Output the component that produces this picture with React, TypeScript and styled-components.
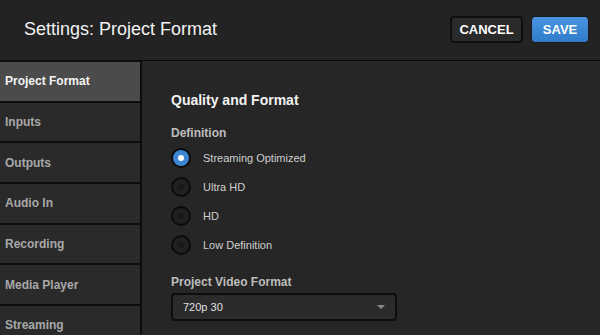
import styled, { createGlobalStyle } from "styled-components"

const GlobalStyle = createGlobalStyle`
  html, body {
    margin: 0;
    padding: 0;
    background: #232323;
  }
  body {
    font-family: "Liberation Sans", Arial, sans-serif;
    -webkit-font-smoothing: antialiased;
  }
`

const Page = styled.div`
  width: 600px;
  height: 335px;
  display: flex;
  flex-direction: column;
  overflow: hidden;
  background: #232323;
`

const Header = styled.header`
  height: 61px;
  flex: none;
  display: flex;
  align-items: center;
  justify-content: space-between;
  padding: 0 11px 0 24px;
  box-sizing: border-box;
  background: #232323;
  border-bottom: 1px solid #0b0b0b;
`

const Title = styled.h1`
  margin: 0 0 1px;
  font-size: 18px;
  font-weight: normal;
  color: #f2f2f2;
`

const Actions = styled.div`
  display: flex;
  gap: 8px;
  margin-top: -1px;
`

const Button = styled.button<{ $primary?: boolean }>`
  height: 27px;
  width: ${(p) => (p.$primary ? "58px" : "73px")};
  padding: 0;
  border-radius: 4px;
  font-family: "Liberation Sans", Arial, sans-serif;
  font-size: 13px;
  font-weight: bold;
  color: #fff;
  border: ${(p) => (p.$primary ? "1px solid #1b1b1b" : "2px solid #0f0f0f")};
  background: ${(p) =>
    p.$primary ? "linear-gradient(#4a95e0, #2f7ccb)" : "#2a2a2a"};
  box-sizing: border-box;
`

const Body = styled.div`
  flex: 1;
  display: flex;
  min-height: 0;
`

const Sidebar = styled.nav`
  width: 140px;
  flex: none;
  display: flex;
  flex-direction: column;
  gap: 2px;
  background: #0d0d0d;
  padding-top: 1px;
  border-right: 2px solid #0d0d0d;
`

const NavItem = styled.div<{ $active?: boolean }>`
  height: 38.7px;
  flex: none;
  display: flex;
  align-items: center;
  padding-left: 5px;
  font-size: 12px;
  font-weight: bold;
  color: ${(p) => (p.$active ? "#f4f4f4" : "#a8a8a8")};
  background: ${(p) => (p.$active ? "#4b4b4b" : "#2a2a2a")};
`

const Content = styled.main`
  flex: 1;
  padding: 31px 0 0 29px;
  background: #262626;
`

const SectionTitle = styled.h2`
  margin: 0 0 18px;
  font-size: 14px;
  font-weight: bold;
  color: #f2f2f2;
`

const Label = styled.div<{ $tight?: boolean }>`
  font-size: 12px;
  font-weight: bold;
  color: #bdbdbd;
  margin-bottom: ${(p) => (p.$tight ? "4px" : "9px")};
`

const RadioList = styled.div`
  display: flex;
  flex-direction: column;
  gap: 11px;
  margin-bottom: 21px;
`

const RadioRow = styled.label`
  display: flex;
  align-items: center;
  gap: 12px;
  font-size: 11px;
  color: #cfcfcf;
  height: 18px;
`

const RadioDot = styled.span<{ $checked?: boolean }>`
  width: 20px;
  height: 20px;
  border-radius: 50%;
  box-sizing: border-box;
  border: 2px solid #0b0b0b;
  background: ${(p) => (p.$checked ? "#3d86d2" : "#202020")};
  display: flex;
  align-items: center;
  justify-content: center;
  &::after {
    content: "";
    width: 6px;
    height: 6px;
    border-radius: 50%;
    background: ${(p) => (p.$checked ? "#ffffff" : "#181818")};
  }
`

const Select = styled.div`
  width: 226px;
  height: 28px;
  box-sizing: border-box;
  border: 2px solid #0d0d0d;
  border-radius: 4px;
  background: #2b2b2b;
  display: flex;
  align-items: center;
  justify-content: space-between;
  padding: 0 10px 0 10px;
  font-size: 11px;
  color: #e0e0e0;
`

const Caret = styled.span`
  width: 0;
  height: 0;
  border-left: 4px solid transparent;
  border-right: 4px solid transparent;
  border-top: 4px solid #8a8a8a;
`

const navItems = [
  "Project Format",
  "Inputs",
  "Outputs",
  "Audio In",
  "Recording",
  "Media Player",
  "Streaming",
]

const definitions = ["Streaming Optimized", "Ultra HD", "HD", "Low Definition"]

export default function App() {
  return (
    <Page>
      <GlobalStyle />
      <Header>
        <Title>Settings: Project Format</Title>
        <Actions>
          <Button>CANCEL</Button>
          <Button $primary>SAVE</Button>
        </Actions>
      </Header>
      <Body>
        <Sidebar>
          {navItems.map((item, i) => (
            <NavItem key={item} $active={i === 0}>
              {item}
            </NavItem>
          ))}
        </Sidebar>
        <Content>
          <SectionTitle>Quality and Format</SectionTitle>
          <Label>Definition</Label>
          <RadioList>
            {definitions.map((d, i) => (
              <RadioRow key={d}>
                <RadioDot $checked={i === 0} />
                {d}
              </RadioRow>
            ))}
          </RadioList>
          <Label $tight>Project Video Format</Label>
          <Select>
            720p 30
            <Caret />
          </Select>
        </Content>
      </Body>
    </Page>
  )
}
